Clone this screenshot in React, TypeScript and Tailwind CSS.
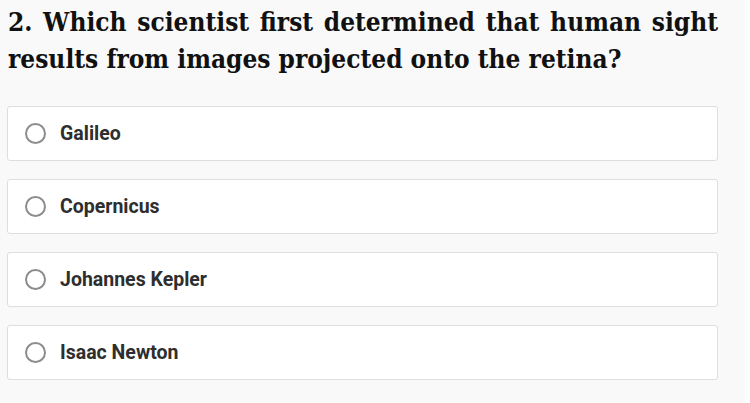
import React from 'react';

const options = ['Galileo', 'Copernicus', 'Johannes Kepler', 'Isaac Newton'];

export default function App() {
  return (
    <div className="flex w-[750px] h-[403px] overflow-hidden bg-[#fdfdfd]">
      <div className="w-[745px] h-full bg-[#f9f9f9] pl-[8px] pr-[27px]">
        <h2
          className="text-[26px] leading-[37px] font-bold text-[#111] text-justify pt-[4px]"
          style={{ fontFamily: "'DejaVu Serif Condensed', 'DejaVu Serif', serif", fontStretch: 'condensed' }}
        >
          2. Which scientist first determined that human sight results from images projected onto the retina?
        </h2>
        <div className="mt-[28px] flex flex-col gap-[18px]">
          {options.map((opt) => (
            <label
              key={opt}
              className="flex items-center h-[55px] -ml-[1px] bg-white border border-[#dedede] rounded-[3px] pl-[17px] cursor-pointer"
            >
              <span className="w-[21px] h-[21px] rounded-full border-2 border-[#8c8c8c] bg-white shrink-0" />
              <span
                className="ml-[14px] text-[19.5px] font-bold text-[#2e2e2e]"
                style={{ fontFamily: 'Roboto, sans-serif' }}
              >
                {opt}
              </span>
            </label>
          ))}
        </div>
      </div>
    </div>
  );
}
